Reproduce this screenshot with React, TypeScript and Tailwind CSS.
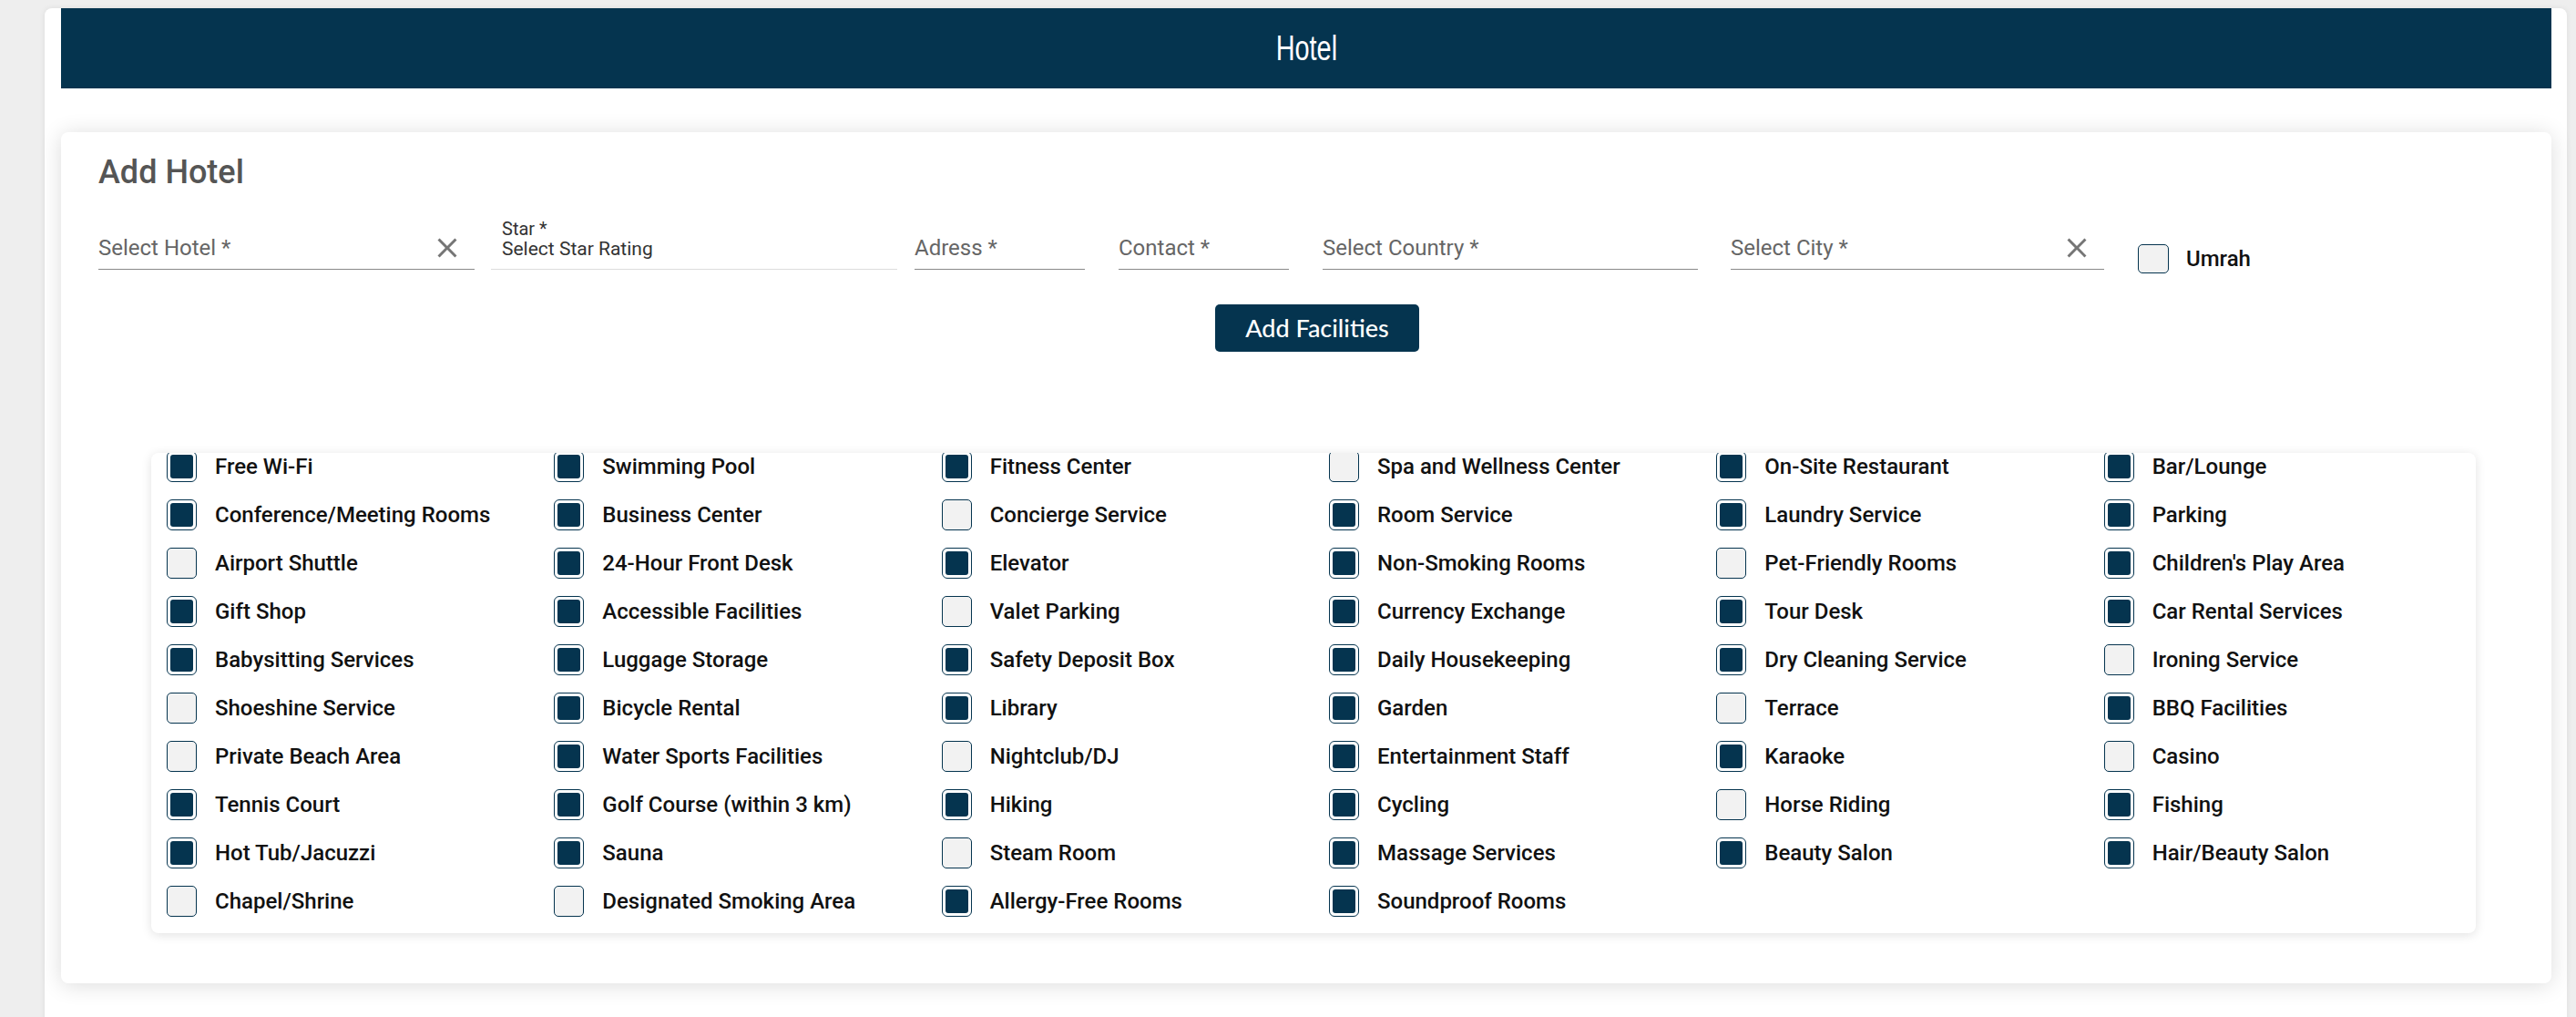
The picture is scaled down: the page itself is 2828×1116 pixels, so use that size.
import { ReactNode } from "react";

const NAVY = "#05344f";

const facilities: [string, boolean][] = [
  ["Free Wi-Fi", true],
  ["Swimming Pool", true],
  ["Fitness Center", true],
  ["Spa and Wellness Center", false],
  ["On-Site Restaurant", true],
  ["Bar/Lounge", true],
  ["Conference/Meeting Rooms", true],
  ["Business Center", true],
  ["Concierge Service", false],
  ["Room Service", true],
  ["Laundry Service", true],
  ["Parking", true],
  ["Airport Shuttle", false],
  ["24-Hour Front Desk", true],
  ["Elevator", true],
  ["Non-Smoking Rooms", true],
  ["Pet-Friendly Rooms", false],
  ["Children's Play Area", true],
  ["Gift Shop", true],
  ["Accessible Facilities", true],
  ["Valet Parking", false],
  ["Currency Exchange", true],
  ["Tour Desk", true],
  ["Car Rental Services", true],
  ["Babysitting Services", true],
  ["Luggage Storage", true],
  ["Safety Deposit Box", true],
  ["Daily Housekeeping", true],
  ["Dry Cleaning Service", true],
  ["Ironing Service", false],
  ["Shoeshine Service", false],
  ["Bicycle Rental", true],
  ["Library", true],
  ["Garden", true],
  ["Terrace", false],
  ["BBQ Facilities", true],
  ["Private Beach Area", false],
  ["Water Sports Facilities", true],
  ["Nightclub/DJ", false],
  ["Entertainment Staff", true],
  ["Karaoke", true],
  ["Casino", false],
  ["Tennis Court", true],
  ["Golf Course (within 3 km)", true],
  ["Hiking", true],
  ["Cycling", true],
  ["Horse Riding", false],
  ["Fishing", true],
  ["Hot Tub/Jacuzzi", true],
  ["Sauna", true],
  ["Steam Room", false],
  ["Massage Services", true],
  ["Beauty Salon", true],
  ["Hair/Beauty Salon", true],
  ["Chapel/Shrine", false],
  ["Designated Smoking Area", false],
  ["Allergy-Free Rooms", true],
  ["Soundproof Rooms", true],
];

function Box({ checked }: { checked: boolean }) {
  if (checked) {
    return (
      <div className="h-[34px] w-[33px] shrink-0 rounded-[6px] border border-[#05344f] bg-white p-[3px]">
        <div className="h-full w-full rounded-[3px] bg-[#05344f]" />
      </div>
    );
  }
  return <div className="h-[34px] w-[33px] shrink-0 rounded-[5px] border border-[#05344f] bg-[#f2f2f2]" />;
}

function ClearIcon() {
  return (
    <svg width="36" height="36" viewBox="0 0 24 24" className="-my-[4px] mr-[12px] shrink-0" fill="#757575">
      <path d="M19 6.41 17.59 5 12 10.59 6.41 5 5 6.41 10.59 12 5 17.59 6.41 19 12 13.41 17.59 19 19 17.59 13.41 12z" />
    </svg>
  );
}

function Field({ className, children, clear }: { className: string; children: ReactNode; clear?: boolean }) {
  return (
    <div className={`flex items-center justify-between border-b border-[#8a8a8a] pb-[9px] ${className}`}>
      <span className="text-[24px] leading-[28px] text-[#666]">{children}</span>
      {clear && <ClearIcon />}
    </div>
  );
}

export default function App() {
  return (
    <div className="min-h-screen bg-[#eeeeee] pt-[9px] [font-family:Roboto,'Liberation_Sans',sans-serif]">
      <div className="ml-[49px] mr-[10px] rounded-lg bg-white pb-[60px] pl-[18px] pr-[17px] shadow-[0_0_6px_rgba(0,0,0,0.08)]">
        <div className="flex h-[88px] items-center justify-center" style={{ backgroundColor: NAVY }}>
          <span className="inline-block scale-x-[0.76] text-[38px] leading-none text-white [font-family:'Liberation_Sans',Arial,sans-serif]">
            Hotel
          </span>
        </div>

        <div className="mt-[48px] rounded-lg bg-white pb-[55px] pl-[41px] pr-[41px] pt-[23px] shadow-[0_2px_24px_rgba(0,0,0,0.14)]">
          <h2 className="text-[36px] font-medium leading-[42px] text-[#555]">Add Hotel</h2>

          <div className="mt-[31px] flex items-end">
            <Field className="w-[413px]" clear>
              Select Hotel *
            </Field>
            <div className="ml-[18px] w-[446px] border-b border-[#dddddd] pb-[10px] pl-[12px] text-[#333]">
              <div className="text-[20px] leading-[20px]">Star *</div>
              <div className="text-[21px] leading-[24px]">Select Star Rating</div>
            </div>
            <Field className="ml-[19px] w-[187px]">Adress *</Field>
            <Field className="ml-[37px] w-[187px]">Contact *</Field>
            <Field className="ml-[37px] w-[412px]">Select Country *</Field>
            <Field className="ml-[36px] w-[410px]" clear>
              Select City *
            </Field>
            <div className="-mb-[4px] ml-[37px] flex items-center gap-[19px]">
              <div className="h-[32px] w-[34px] rounded-[5px] border border-[#05344f] bg-[#f2f2f2]" />
              <span className="text-[24px] font-medium leading-[28px] text-[#111]">Umrah</span>
            </div>
          </div>

          <div className="mt-[38px] flex justify-center pl-[24px]">
            <button className="flex h-[52px] w-[224px] items-center justify-center rounded-[5px] bg-[#05344f] text-[27px] font-medium text-white [font-family:Lato,'Open_Sans',sans-serif]">
              Add Facilities
            </button>
          </div>

          <div className="ml-[58px] mr-[42px] mt-[111px] overflow-hidden rounded-lg bg-white pb-[18px] shadow-[0_2px_12px_rgba(0,0,0,0.12)]">
            <div className="-mt-[2px] grid grid-cols-6 gap-y-[19px]">
              {facilities.map(([name, on]) => (
                <div key={name} className="flex h-[34px] items-center gap-[20px] pl-[17px]">
                  <Box checked={on} />
                  <span className="whitespace-nowrap text-[24px] font-medium leading-[28px] text-[#111]">{name}</span>
                </div>
              ))}
            </div>
          </div>
        </div>
      </div>
    </div>
  );
}
